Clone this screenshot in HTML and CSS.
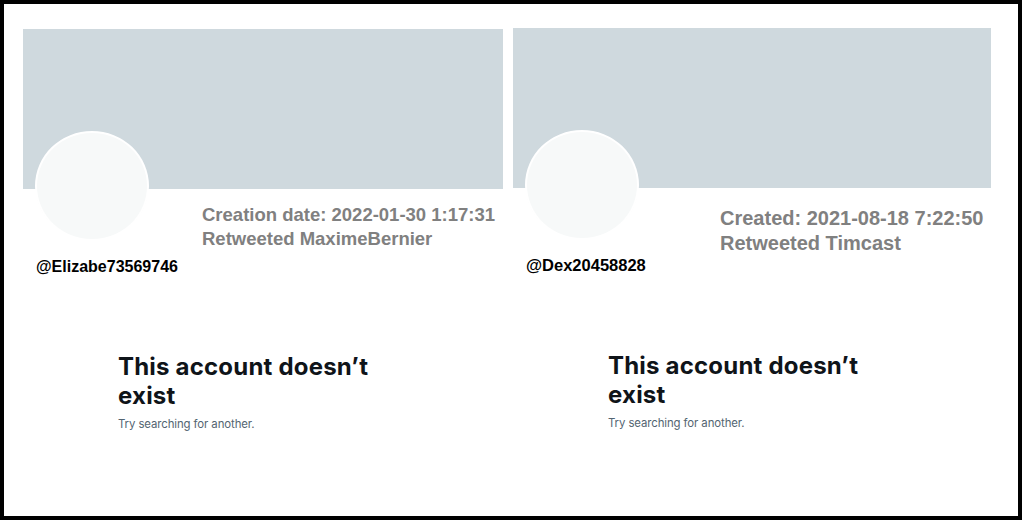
FILE: index.html
```html
<!DOCTYPE html>
<html lang="en">
<head>
    <meta charset="UTF-8">
    <meta name="viewport" content="width=device-width, initial-scale=1.0">
    <title>Deleted accounts</title>
    <link rel="stylesheet" href="styles.css">
</head>
<body>
    <div class="frame">
        <div class="card card-left">
            <div class="banner"></div>
            <div class="profile">
                <div class="avatar-col">
                    <div class="avatar"></div>
                    <div class="handle">@Elizabe73569746</div>
                </div>
                <div class="meta">
                    <p>Creation date: 2022-01-30 1:17:31</p>
                    <p>Retweeted MaximeBernier</p>
                </div>
            </div>
            <div class="empty">
                <h2>This account doesn’t exist</h2>
                <p>Try searching for another.</p>
            </div>
        </div>

        <div class="card card-right">
            <div class="banner"></div>
            <div class="profile">
                <div class="avatar-col">
                    <div class="avatar"></div>
                    <div class="handle">@Dex20458828</div>
                </div>
                <div class="meta">
                    <p>Created: 2021-08-18 7:22:50</p>
                    <p>Retweeted Timcast</p>
                </div>
            </div>
            <div class="empty">
                <h2>This account doesn’t exist</h2>
                <p>Try searching for another.</p>
            </div>
        </div>
    </div>
</body>
</html>
```

FILE: styles.css
```css
body {
    margin: 0;
    background-color: #fff;
    font-family: 'Liberation Sans', Arial, sans-serif;
}

.frame {
    box-sizing: border-box;
    width: 1022px;
    height: 520px;
    border: 4px solid #000;
    background: #fff;
    display: flex;
    gap: 10px;
    padding: 24px 0 0 19px;
}

.card {
    width: 480px;
}

.card-right {
    width: 478px;
}

.card-left {
    margin-top: 1px;
}

.banner {
    height: 160px;
    background-color: #cfd9de;
}

.profile {
    display: flex;
    margin-top: -58px;
}

.avatar-col {
    flex: none;
    width: 114px;
    margin-left: 12px;
}

.avatar {
    box-sizing: border-box;
    width: 114px;
    height: 110px;
    border: 2px solid #fff;
    border-radius: 50%;
    background-color: #f7f9f9;
}

.handle {
    margin: 16px 0 0 1px;
    font-size: 16px;
    line-height: 19px;
    font-weight: bold;
    color: #000;
    white-space: nowrap;
}

.card-right .handle {
    font-size: 16.5px;
}

.meta {
    margin: 72px 0 0 53px;
    color: #808080;
    font-size: 18.5px;
    line-height: 24px;
    font-weight: bold;
    white-space: nowrap;
}

.card-right .meta {
    margin: 76px 0 0 81px;
    font-size: 20px;
    line-height: 25px;
}

.meta p {
    margin: 0;
}

.empty {
    margin-top: 76px;
    padding-left: 95px;
    font-family: Inter, 'Liberation Sans', sans-serif;
}

.empty h2 {
    margin: 0;
    max-width: 300px;
    font-size: 24px;
    line-height: 29px;
    font-weight: 700;
    letter-spacing: 0.2px;
    color: #0f1419;
}

.empty p {
    margin: 6px 0 0;
    font-size: 11.4px;
    line-height: 16px;
    letter-spacing: -0.1px;
    color: #536471;
}
```
